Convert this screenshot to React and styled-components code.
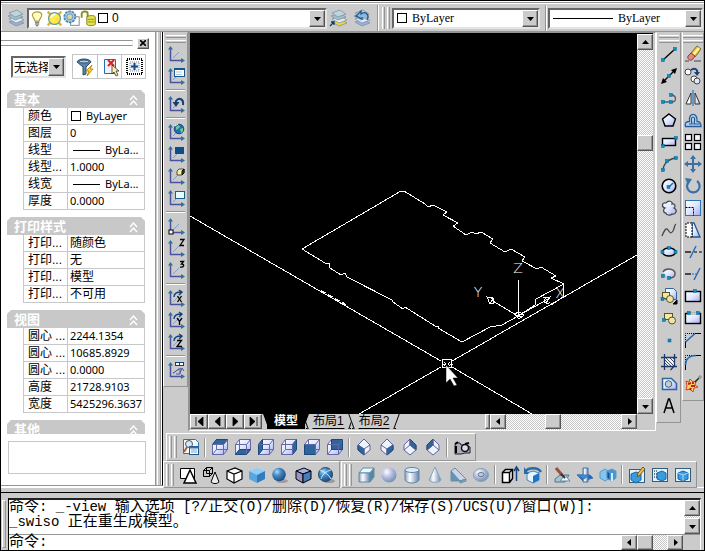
import React from 'react';
import styled, { createGlobalStyle, css } from 'styled-components';

const FACE = '#cbcbcb';
const SHADOW = '#949494';
const NAVY = '#4a52a0';
const BLUE = '#2f6699';

const GlobalStyle = createGlobalStyle`
  * {
    box-sizing: border-box;
  }

  body {
    margin: 0;
    background: ${FACE};
    color: #000;
    font: 12px/16px "Liberation Sans", "Noto Sans CJK SC", sans-serif;
  }

  button, input, select {
    margin: 0;
    padding: 0;
    border: 0;
    border-radius: 0;
    background: none;
    color: inherit;
    font: inherit;
  }

  svg {
    display: block;
    flex: none;
  }
`;

const Window = styled.div`
  display: flex;
  flex-direction: column;
  min-height: 100vh;
  border: 1px solid #000;
  background: ${FACE};
`;

const raised = css`
  border: 1px solid;
  border-color: #fff #555 #555 #fff;
  box-shadow: inset -1px -1px 0 ${SHADOW};
  background: ${FACE};
`;

const Main = styled.main`
  display: flex;
  flex: 1;
`;

const WorkArea = styled.div`
  display: flex;
  flex: 1;
  flex-direction: column;
  min-width: 0;
`;

const Upper = styled.div`
  display: flex;
  flex: 1;
  align-items: flex-start;
`;

/* ---------- toolbars ---------- */

const TopBar = styled.header`
  display: flex;
  height: 31px;
  padding-top: 3px;
  background: ${FACE};
  border-top: 1px solid #fff;
  border-bottom: 1px solid ${SHADOW};
  box-shadow: inset 0 1px 0 ${SHADOW}, inset 0 2px 0 #fff;
`;

const TopGroup = styled.div`
  display: flex;
  align-items: center;
  flex: ${props => (props.$grow ? '1 1 0' : 'none')};
  min-width: 0;
  padding-left: ${props => props.$start || 0}px;
  padding-right: ${props => props.$end || 0}px;
  border-right: 1px solid ${props => (props.$last ? FACE : SHADOW)};
  box-shadow: inset 1px 0 0 #fff;
`;

const Bar = styled.div`
  display: flex;
  flex: none;
  flex-direction: ${props => (props.$vertical ? 'column' : 'row')};
  align-items: center;
  width: ${props => (props.$width ? `${props.$width}px` : 'auto')};
  height: ${props => (props.$height ? `${props.$height}px` : 'auto')};
  padding: ${props => (props.$vertical ? '2px 0 5px' : '0 2px 0 2px')};
  margin-right: ${props => props.$gap || 0}px;
  border: 1px solid;
  border-color: ${props => (props.$vertical ? FACE : '#fff')} ${SHADOW} ${SHADOW} #fff;
`;

const Grip = styled.span`
  flex: none;
  ${props =>
    props.$vertical
      ? css`
          width: 20px;
          height: 8px;
          border-top: 1px solid #fff;
          border-bottom: 1px solid ${SHADOW};
          background: linear-gradient(${FACE} 0 1px, ${SHADOW} 1px 2px, ${FACE} 2px 4px, #fff 4px 5px, ${FACE} 5px);
        `
      : css`
          width: 8px;
          height: 22px;
          margin-right: 2px;
          border-left: 1px solid #fff;
          border-right: 1px solid ${SHADOW};
          background: linear-gradient(90deg, ${FACE} 0 1px, ${SHADOW} 1px 2px, ${FACE} 2px 4px, #fff 4px 5px, ${FACE} 5px);
        `}
`;

const Tool = styled.button`
  display: flex;
  flex: none;
  align-items: center;
  justify-content: center;
  width: ${props => (props.$wide ? 23 : 22)}px;
  height: 22px;
`;

const Divider = styled.span`
  flex: none;
  ${props =>
    props.$vertical
      ? css`
          width: 19px;
          height: 2px;
          margin: 2px 0;
          border-top: 1px solid ${SHADOW};
          border-bottom: 1px solid #fff;
        `
      : css`
          width: 2px;
          height: 19px;
          margin: 0 2px;
          border-left: 1px solid ${SHADOW};
          border-right: 1px solid #fff;
        `}
`;

const Docks = styled.div`
  padding: 2px 0 3px;
  border-bottom: 1px solid ${FACE};
  box-shadow: inset 0 -3px 0 ${FACE}, inset 0 -4px 0 #fff;
`;

const DockRow = styled.div`
  display: flex;
  padding-left: ${props => props.$indent || 0}px;
`;

/* ---------- combo boxes ---------- */

const ComboBox = styled.div`
  display: flex;
  flex: ${props => (props.$grow ? '1 1 0' : 'none')};
  align-items: center;
  width: ${props => props.$width}px;
  min-width: 0;
  height: ${props => props.$height || 21}px;
  padding-left: ${props => props.$pad || 0}px;
  border: 2px solid;
  border-color: #666 #e4e4e4 #e4e4e4 #666;
  background: #fff;

  select {
    flex: 1;
    min-width: 0;
    height: 100%;
    padding-left: ${props => props.$textPad || 0}px;
    appearance: none;
    outline: none;
    font: ${props => props.$font};
  }
`;

const ComboArrow = styled.span`
  ${raised}
  display: flex;
  flex: none;
  align-items: center;
  justify-content: center;
  width: 16px;
  height: 100%;
`;

const SERIF = '12px "Liberation Serif", serif';
const SANS = '12px "Liberation Sans", sans-serif';

/* ---------- properties palette ---------- */

const Palette = styled.aside`
  display: flex;
  flex: none;
  flex-direction: column;
  width: 162px;
  border-right: 1px solid #000;
  margin-bottom: 6px;
  padding: 5px 17px 0 6px;
  border-bottom: 1px solid ${SHADOW};
  box-shadow: 0 2px 0 #fff;
  background: linear-gradient(90deg, #fff 0 154px, ${SHADOW} 154px 155px, ${FACE} 155px 156px, #fff 156px 157px, ${FACE} 157px 159px, ${SHADOW} 159px 160px, #fff 160px);
`;

const TitleRow = styled.div`
  display: flex;
  align-items: center;
  gap: 4px;
  height: 12px;
  margin-left: -6px;
  margin-right: -4px;
`;

const TitleGrip = styled.span`
  flex: 1;
  height: 6px;
  border: 1px solid ${SHADOW};
  border-left: 0;
  border-right-color: #eee;
`;

const CloseButton = styled.button`
  ${raised}
  display: flex;
  align-items: center;
  justify-content: center;
  width: 12px;
  height: 11px;
`;

const PickRow = styled.div`
  display: flex;
  justify-content: space-between;
  align-items: center;
  margin: 5px -1px 11px 4px;
`;

const PickTools = styled.div`
  display: flex;
  border: 1px solid #c4c4c4;

  button + button {
    border-left: 1px solid #c4c4c4;
  }

  button {
    width: 24px;
    height: 23px;
  }
`;

const Section = styled.section`
  margin-bottom: 7px;
`;

const SectionHead = styled.button`
  display: flex;
  align-items: flex-start;
  justify-content: space-between;
  width: 100%;
  height: ${props => (props.$cut ? 14 : 18)}px;
  padding: 1px 7px 0 7px;
  overflow: hidden;
  background: #c8c8c8;
  clip-path: polygon(4px 0, calc(100% - 4px) 0, 100% 4px, 100% 100%, 0 100%, 0 4px);
  color: #fff;
  font-size: 13px;
  font-weight: bold;
  line-height: 17px;
  text-align: left;

  svg {
    margin-top: 4px;
  }
`;

const PropTable = styled.table`
  width: calc(100% - 16px);
  margin-left: 16px;
  border-spacing: 0;
  table-layout: fixed;

  th, td {
    height: 17px;
    padding: 0 0 0 2px;
    overflow: hidden;
    border-right: 1px solid #c8c8c8;
    border-bottom: 1px solid #c8c8c8;
    font-weight: normal;
    line-height: 16px;
    text-align: left;
    white-space: nowrap;
  }

  th {
    width: 45px;
    padding-left: 4px;
    border-left: 1px solid #c8c8c8;
  }
`;

const Value = styled.span`
  display: flex;
  align-items: center;
  height: 16px;
  font-family: "Noto Sans", "Noto Sans CJK SC", sans-serif;
  font-size: ${props => (props.$cjk ? 12 : 11)}px;
`;

const Swatch = styled.i`
  flex: none;
  width: 10px;
  height: 10px;
  margin: 0 ${props => (props.$tight ? 0 : 5)}px 0 1px;
  border: 1px solid #000;
`;

const Rule = styled.i`
  flex: none;
  width: ${props => props.$width || 27}px;
  height: 1px;
  margin: 0 5px 0 3px;
  background: #000;
`;

const Info = styled.div`
  height: 33px;
  margin: 0 -1px 11px 1px;
  border: 1px solid #c8c8c8;
`;

/* ---------- drawing area ---------- */

const Viewport = styled.div`
  display: flex;
  flex: 1;
  flex-direction: column;
  align-self: stretch;
  min-width: 0;
  padding-right: 2px;
  border: solid;
  border-width: 1px 1px 1px 2px;
  border-color: ${SHADOW} #fff #fff ${SHADOW};
`;

const ViewRow = styled.div`
  display: flex;
  flex: 1;
  border-top: 1px solid #000;
`;

const Canvas = styled.svg`
  flex: 1 1 0;
  width: 0;
  min-width: 0;
  align-self: stretch;
  background: #000;
`;

const TabRow = styled.div`
  display: flex;
  flex: none;
  height: 16px;
  margin-right: 16px;
`;

const Track = styled.div`
  display: flex;
  flex: none;
  flex-direction: ${props => (props.$vertical ? 'column' : 'row')};
  justify-content: space-between;
  width: ${props => (props.$width ? `${props.$width}px` : 'auto')};
  background: repeating-conic-gradient(#fff 0 25%, #c6c6c6 0 50%) 0 0 / 2px 2px;
`;

const ScrollButton = styled.button`
  ${raised}
  display: flex;
  flex: none;
  align-items: center;
  justify-content: center;
  width: ${props => props.$w || 16}px;
  height: ${props => props.$h || 16}px;
`;

const Gap = styled.span`
  flex: ${props => props.$n || 1} 1 0;
`;

const Tab = styled.button`
  position: relative;
  z-index: ${props => (props.$active ? 1 : 0)};
  height: 15px;
  margin-right: 1px;
  padding: 0 7px;
  border-bottom: 1px solid #000;
  background: ${props => (props.$active ? '#000' : FACE)};
  color: ${props => (props.$active ? '#fff' : '#000')};
  font-weight: ${props => (props.$active ? 'bold' : 'normal')};
  line-height: 14px;

  &::before, &::after {
    content: '';
    position: absolute;
    top: 0;
    width: 4px;
    height: 15px;
    background: inherit;
  }

  &::before {
    left: -1px;
    border-left: 1px solid #000;
    transform: skewX(20deg);
  }

  &::after {
    right: -1px;
    border-right: 1px solid #000;
    transform: skewX(-20deg);
  }
`;

const Tabs = styled.div`
  display: flex;
  padding-left: 5px;
`;

/* ---------- command window ---------- */

const Command = styled.footer`
  display: flex;
  flex: none;
  height: 58px;
  padding: 5px 3px 0 1px;
  border-top: 1px solid #000;
`;

const CommandGrip = styled.span`
  width: 4px;
  margin: 2px 2px 2px 0;
  border: 1px solid;
  border-color: #fff ${SHADOW} ${SHADOW} #fff;
`;

const CommandBox = styled.div`
  flex: 1;
  min-width: 0;
  border-top: 2px solid #222;
  border-left: 1px solid #000;
  border-right: 1px solid #fff;
`;

const History = styled.div`
  display: flex;
  height: 35px;
  border-bottom: 1px solid ${SHADOW};
  background: #fff;
`;

const Lines = styled.div`
  flex: 1;
  min-width: 0;
  overflow: hidden;
`;

const Line = styled.p`
  margin: 0;
  height: 15px;
  font: 14px/15px "Liberation Mono", "Noto Sans CJK SC", monospace;
  white-space: pre;
`;

const Cjk = styled.span`
  font-size: 15px;
  line-height: 15px;
  vertical-align: bottom;
`;

const Prompt = styled.div`
  display: flex;
  height: 15px;
  background: #fff;

  label {
    flex: none;
    font: 14px/15px "Liberation Mono", "Noto Sans CJK SC", monospace;
  }

  input {
    flex: 1;
    min-width: 0;
    padding-left: 6px;
    outline: none;
    font: 14px "Liberation Mono", monospace;
  }
`;

const Corner = styled.span`
  width: ${props => (props.$open ? 14 : 17)}px;
  background: ${props => (props.$open ? 'none' : FACE)};
`;

/* ---------- icons ---------- */

const Icon = ({ children, size = 20 }) => (
  <svg width={size} height={size} viewBox="0 0 20 20" fill="none" stroke="#000" aria-hidden="true">
    {children}
  </svg>
);

const arrowPaths = {
  up: 'M0 5h7L3.500 1z',
  down: 'M0 2h7L3.500 6z',
  left: 'M5 0v7L1 3.500z',
  right: 'M2 0v7l4-3.500z',
};

const Arrow = ({ dir }) => (
  <svg width="7" height="7" viewBox="0 0 7 7" aria-hidden="true">
    <path d={arrowPaths[dir]} />
  </svg>
);

const Dot = ({ x, y }) => <rect x={x - 1.5} y={y - 1.5} width="3" height="3" fill="#0a8fc4" stroke="#05628c" strokeWidth=".5" />;

const Defs = () => (
  <svg width="0" height="0" style={{ position: 'absolute' }} aria-hidden="true">
    <defs>
      <linearGradient id="glass" x1="0" y1="0" x2="1" y2="1">
        <stop offset="0" stopColor="#fff" />
        <stop offset=".5" stopColor="#dfe8ff" />
        <stop offset="1" stopColor="#a7a8ec" />
      </linearGradient>
      <linearGradient id="metal">
        <stop offset="0" stopColor="#8f9fc4" />
        <stop offset=".35" stopColor="#fff" />
        <stop offset=".65" stopColor="#b9c3df" />
        <stop offset="1" stopColor="#5a86a6" />
      </linearGradient>
      <radialGradient id="pearl" cx=".35" cy=".3" r=".75">
        <stop offset="0" stopColor="#fff" />
        <stop offset=".5" stopColor="#b5b9e0" />
        <stop offset="1" stopColor="#6d8fae" />
      </radialGradient>
      <radialGradient id="ball" cx=".35" cy=".3" r=".75">
        <stop offset="0" stopColor="#a9dcfa" />
        <stop offset=".4" stopColor="#4688c4" />
        <stop offset="1" stopColor="#17497c" />
      </radialGradient>
    </defs>
  </svg>
);

const Ucs = ({ children }) => (
  <Icon>
    <path d="M7 14l6-6" stroke="#7fa0c4" />
    <path d="M4.500 4v13M4 16.500h13" stroke={NAVY} strokeWidth="1.500" />
    <path d="M2 5.500L4.500 2 7 5.500zM15 14l4 2.500-4 2.500z" fill="#2b7499" stroke="none" />
    {children}
  </Icon>
);

const axisArc = <path d="M8 9c0-4 3-5 7-5M13 2l3 2-3 3" stroke="#123f77" strokeWidth="1.400" />;

const glyphX = <path d="M11.500 8l4 6M15.500 8l-4 6" strokeWidth="1.300" />;
const glyphY = <path d="M11 8l2.500 3.500L16 8M13.500 11v4" strokeWidth="1.300" />;
const glyphZ = <path d="M11 8.500h4.500l-4.500 6h5" strokeWidth="1.300" />;

const ucsIcons = [
  ['UCS', null],
  ['命名 UCS', <g key="g"><rect x="8.500" y="2.500" width="10" height="8" fill="#fff" stroke="#17578c" /><path d="M8 3h11" stroke="#17578c" strokeWidth="2" /><path d="M10 6h6M10 8.500h6" stroke="#aac3de" /></g>],
  '|',
  ['上一个 UCS', <g key="g"><path d="M17 11c1-6-4-8-7-4v3" stroke="#173f77" strokeWidth="2" /><path d="M6.500 8h7L10 13z" fill="#173f77" stroke="none" /></g>],
  '|',
  ['世界 UCS', <g key="g"><circle cx="13" cy="7" r="4.800" fill="#1d6cbc" stroke="#1c477c" /><path d="M10 5l3-2 1 2-2 2-2 1zM14 7l3-1v3l-2 2z" fill="#6ed07a" stroke="none" /><path d="M9 4l3-2" stroke="#fff" /></g>],
  ['对象 UCS', <rect key="r" x="9.500" y="3.500" width="8" height="6" fill="#0d4f85" stroke="#0d4f85" />],
  ['面 UCS', <g key="g"><path d="M11 5l2-2h5v4l-2 2h-5z" fill="#f4edae" stroke="#554f2c" /><path d="M16 5l2-2v4l-2 2z" fill="#64603a" /></g>],
  ['视图 UCS', <rect key="r" x="9.500" y="3.500" width="9" height="7" fill="#e8fbff" stroke="#1a628c" />],
  '|',
  ['原点 UCS', <rect key="r" x="3" y="14" width="4" height="4" fill="#fff" />],
  ['Z 轴矢量 UCS', <path key="p" d="M14 1.500h4l-4 6h4" strokeWidth="1.300" />],
  ['三点 UCS', <path key="p" d="M14 1.500h3.500L15.500 4c4 0 2 4-1.500 3" strokeWidth="1.300" />],
  '|',
  ['X 轴旋转 UCS', <g key="g">{axisArc}{glyphX}</g>],
  ['Y 轴旋转 UCS', <g key="g">{axisArc}{glyphY}</g>],
  ['Z 轴旋转 UCS', <g key="g">{axisArc}{glyphZ}</g>],
  '|',
  ['应用 UCS', <g key="g"><rect x="9.500" y="2.500" width="4" height="3" fill="#fff" stroke="#123f77" /><rect x="13.500" y="2.500" width="4" height="3" fill="#fff" stroke="#123f77" /><path d="M7 13l8-5M10 14h4V9M14 13l2-5 2 3" stroke={NAVY} /></g>],
];

const drawIcons = [
  ['直线', <g key="g"><path d="M4 16L16 5" strokeWidth="1.300" /><Dot x={4} y={16} /><Dot x={16} y={5} /></g>],
  ['构造线', <g key="g"><path d="M4 16L16 4" strokeWidth="1.300" /><path d="M2 18l2-6 4 4zM18 2l-6 2 4 4z" fill="#000" stroke="none" /><Dot x={10} y={10} /></g>],
  ['多段线', <g key="g"><path d="M4 14h8" stroke={BLUE} strokeWidth="1.500" /><path d="M12 14c6 1 6-7 0-7" stroke="#7c4e50" strokeWidth="1.300" /><Dot x={4} y={14} /><Dot x={12} y={14} /><Dot x={12} y={7} /></g>],
  ['正多边形', <path key="p" d="M10 4l6.500 5-2.500 7H6L3.500 9z" fill="url(#glass)" strokeWidth="1.400" />],
  ['矩形', <g key="g"><rect x="3.500" y="6.500" width="13" height="7" fill="url(#glass)" strokeWidth="1.400" /><Dot x={4} y={14} /><Dot x={17} y={6} /></g>],
  ['圆弧', <g key="g"><path d="M4 17C4 10 9 5 17 4" strokeWidth="1.300" stroke="#444" /><Dot x={4} y={16} /><Dot x={8} y={7} /><Dot x={17} y={4} /></g>],
  ['圆', <g key="g"><circle cx="10" cy="10" r="6.800" fill="url(#glass)" strokeWidth="1.600" /><path d="M10 11l4-4" stroke="#1471a5" strokeWidth="1.500" /><Dot x={9.5} y={11} /></g>],
  ['修订云线', <path key="p" d="M6 10c-4-1-3-6 1-5 2-3 7-2 6 1 3-1 4 3 2 4 4 2 2 7-2 6-2 2-6 1-6-1-3 0-3-4-1-5z" fill="url(#glass)" stroke="#444" strokeWidth="1.200" />],
  ['样条曲线', <path key="p" d="M3 16c2-5 4-9 6-6s3 4 5 1 1-6 3-7" strokeWidth="1.300" stroke="#444" />],
  ['椭圆', <g key="g"><ellipse cx="10" cy="10" rx="6.500" ry="4" fill="url(#glass)" strokeWidth="1.500" /><Dot x={3.5} y={10} /><Dot x={16.5} y={10} /><Dot x={10} y={6} /></g>],
  ['椭圆弧', <g key="g"><path d="M4 8c3-5 13-3 12 2 0 3-3 4-6 4" fill="url(#glass)" stroke="#555" strokeWidth="1.400" /><Dot x={4} y={12} /><Dot x={10} y={14} /></g>],
  ['插入块', <g key="g"><path d="M6.500 2.500h8l3 3v8h-11z" fill="url(#glass)" stroke={BLUE} /><rect x="3.500" y="6.500" width="7" height="6" fill="#f4e69a" stroke="#57522c" /><circle cx="11" cy="13" r="3.500" fill="#efe6a5" stroke="#57522c" /><path d="M14 18h4v-4z" fill="#000" /><Dot x={3.5} y={13} /></g>],
  ['创建块', <g key="g"><rect x="5.500" y="5.500" width="8" height="6" fill="#f8eb9b" stroke="#57522c" /><circle cx="13" cy="12.500" r="3.500" fill="#efe6a5" stroke="#57522c" /><Dot x={5} y={12} /></g>],
  ['点', <Dot key="d" x={10.5} y={10.5} />],
  ['图案填充', <g key="g"><path d="M6 5h10v9H6z" fill="#eef2ff" stroke="none" /><path d="M6 11l3 3M6 8l6 6M6 5l9 9M10 5l6 6M13 5l3 3" stroke="#222" strokeWidth=".8" /><path d="M5.500 2v16M15.500 2v12l-4 4M2 5.500h16M2 14.500h16" stroke="#1c386e" strokeWidth="1.300" /></g>],
  ['面域', <g key="g"><path d="M3.500 4.500h9l5 5v6h-14z" fill="url(#glass)" stroke={BLUE} strokeWidth="1.500" /><circle cx="9.500" cy="10" r="3.300" fill={FACE} stroke={BLUE} /></g>],
  ['多行文字', <path key="p" d="M5 17l4.500-14h1L15 17M6.500 12h7" strokeWidth="1.500" />],
];

const modifyIcons = [
  ['删除', <g key="g"><path d="M8 9l6-7 4 3-6 8z" fill="#f5c43a" stroke="#7c6732" /><path d="M10 11l6-7" stroke="#fff4a8" strokeWidth="2" /><path d="M5 12l3-3 4 3-3 4c-2 1-5-1-4-4z" fill="#ed877d" stroke="#7a4341" /><path d="M2 17h4M11 17h7" stroke="#444" /></g>],
  ['复制', <g key="g"><circle cx="5" cy="6" r="3" fill="#fff" stroke="#444" /><circle cx="11" cy="13" r="3" fill="#fff" stroke="#444" /><circle cx="14" cy="15" r="3" fill="#dfe7ff" stroke="#444" /><path d="M8 4c4-3 7 0 6 3" stroke="#16417d" strokeWidth="2" /><path d="M11 6h6l-3 4z" fill="#16417d" stroke="none" /></g>],
  ['镜像', <g key="g"><path d="M8 5v11H3z" fill="#fff" stroke="#333" /><path d="M12 5v11h5z" fill="url(#glass)" stroke="#333" /><path d="M10 2v16" stroke="#3a83c7" strokeWidth="1.400" /></g>],
  ['偏移', <g key="g"><path d="M2.500 16.500c-1-4 1-5 4-5C5 2 15 2 14 11.500c3 0 4 1 4 5z" fill="#b9d3ec" stroke="#245d99" strokeWidth="1.300" /><path d="M6 14h3c-1-4-1-7 1-7s2 3 1 7h6" stroke="#1d5591" strokeWidth="1.200" /></g>],
  ['阵列', <g key="g" fill="#f3f5ff" strokeWidth="1.200"><rect x="2.500" y="2.500" width="6" height="6" /><rect x="11.500" y="2.500" width="6" height="6" /><rect x="2.500" y="11.500" width="6" height="6" /><rect x="11.500" y="11.500" width="6" height="6" /></g>],
  ['移动', <g key="g"><path d="M10 4v12M4 10h12" stroke="#3b70a6" strokeWidth="2" /><path d="M10 1l3 4H7zM10 19l3-4H7zM1 10l4-3v6zM19 10l-4-3v6z" fill="#3b70a6" stroke="none" /></g>],
  ['旋转', <g key="g"><path d="M6 5.500a6.300 6.300 0 1 0 8-.5" stroke="#3b70a6" strokeWidth="2.200" /><path d="M2 2l7 1-4 6z" fill="#3b70a6" stroke="none" /></g>],
  ['缩放', <g key="g"><rect x="2.500" y="2.500" width="15" height="15" fill="url(#glass)" stroke="#2b75b8" /><path d="M2.500 9.500h8v8" strokeDasharray="2 1" /></g>],
  ['拉伸', <g key="g"><path d="M9 3h2l6 14H9z" fill="url(#glass)" stroke="#205a94" strokeWidth="1.300" /><path d="M9 17H3V3h6v14" fill="#fff" strokeDasharray="2 1" /></g>],
  ['修剪', <g key="g"><path d="M7 16l6-12" stroke="#1d6bc0" strokeWidth="1.400" /><path d="M2 10h6" strokeWidth="1.300" /><path d="M11 10h8" strokeDasharray="3 2" /></g>],
  ['延伸', <g key="g"><path d="M11 16l6-12" stroke="#1d6bc0" strokeWidth="1.400" /><path d="M2 10h6" strokeWidth="1.300" /><path d="M9 10h5" stroke="#1d6bc0" strokeDasharray="2 1" /></g>],
  ['打断于点', <g key="g"><rect x="2.500" y="5.500" width="15" height="10" fill="url(#glass)" strokeWidth="1.400" /><Dot x={12} y={5} /></g>],
  ['打断', <g key="g"><rect x="2.500" y="5.500" width="15" height="10" fill="url(#glass)" strokeWidth="1.400" /><path d="M7 5.500h7" stroke={FACE} strokeWidth="2" /><Dot x={6} y={5} /><Dot x={15} y={5} /></g>],
  ['倒角', <g key="g"><path d="M2.500 18v-6M12 3.500h6" /><path d="M2.500 12V3.500H12" strokeDasharray="1 1" /><path d="M2.500 12L12 3.500" stroke="#1769b8" strokeWidth="1.500" /></g>],
  ['圆角', <g key="g"><path d="M2.500 18v-5M13 3.500h5" /><path d="M2.500 12V3.500H12" strokeDasharray="1 1" /><path d="M2.500 13c0-6 4-9.500 10.500-9.500" stroke="#1769b8" strokeWidth="1.500" /></g>],
  ['分解', <g key="g"><path d="M3 7l3 1 1-3 3 3 3-1-1 4 3 2-4 1-1 4-3-3-4 1 1-4z" fill="#fbd75a" stroke="#d5421d" /><path d="M5 10l3-1M8 12h4M8 14l-1 2M10 8v2" stroke="#c51d1d" strokeWidth="2" /><path d="M12 8l4-4" stroke="#222" strokeWidth="1.500" /><path d="M15 3h4M17 1v4" stroke="#888" /></g>],
];

// the six faces of an oblique cube
const faces = {
  top: 'M2.500 7.500l4-5h11l-4 5z',
  bottom: 'M2.500 17.500l4-5h11l-4 5z',
  left: 'M2.500 7.500l4-5v10l-4 5z',
  right: 'M13.500 7.500l4-5v10l-4 5z',
  front: 'M2.500 7.500h11v10h-11z',
  back: 'M6.500 2.500h11v10h-11z',
};

const Cube = ({ side }) => (
  <g stroke="#6467a9">
    <path d="M2.500 7.500l4-5h11v10l-4 5h-11z" fill="url(#glass)" />
    <path d="M6.500 2.500v10h11M6.500 12.500l-4 5" />
    <path d={faces[side]} fill={BLUE} stroke="#164a7a" />
    <path d="M2.500 7.500h11v10M13.500 7.500l4-5" />
  </g>
);

const IsoCube = ({ d, inner }) => (
  <g stroke="#62659e">
    <path d="M10 2l6 6v5l-6 5-6-5V8z" fill="#edf3ff" />
    <path d={d} fill={BLUE} stroke="#174a77" />
    <path d={inner || 'M4 8l6 4 6-4M10 12v6'} />
  </g>
);

const viewIcons = [
  ['命名视图', <g key="g"><path d="M2.500 2.500h12l3 3v11h-15z" fill="#f3fbff" stroke="#2d73af" /><circle cx="8" cy="7" r="3.500" fill="#dce6f0" stroke="#555" /><path d="M6 10l-3 5" stroke="#a55d3e" strokeWidth="2" /><rect x="8.500" y="9.500" width="9" height="8" fill="#fff" stroke="#17578c" /><path d="M8 10.500h10" stroke="#2f6fb0" strokeWidth="2" /><path d="M10 13h6M10 15h6" stroke="#7ba2c9" /></g>],
  '|',
  ['俯视', <Cube key="c" side="top" />],
  ['仰视', <Cube key="c" side="bottom" />],
  ['左视', <Cube key="c" side="left" />],
  ['右视', <Cube key="c" side="right" />],
  ['主视', <Cube key="c" side="front" />],
  ['后视', <Cube key="c" side="back" />],
  '|',
  ['西南等轴测', <IsoCube key="i" d="M4 8l6 4v6l-6-5z" />],
  ['东南等轴测', <IsoCube key="i" d="M16 8l-6 4v6l6-5z" />],
  ['东北等轴测', <IsoCube key="i" d="M10 2l6 6v5l-6-5z" inner="M4 13l6-5 6 5M10 2v6" />],
  ['西北等轴测', <IsoCube key="i" d="M10 2L4 8v5l6-5z" inner="M4 13l6-5 6 5M10 2v6" />],
  '|',
  ['相机', <g key="g"><path d="M4 6h4l1 2h6l3 2v6h-5l-4 1H3V8z" fill="#a9adbf" stroke="#222" /><circle cx="13" cy="11" r="3.500" fill="#d9def2" stroke="#111" strokeWidth="1.500" /><path d="M3 7l3-2M4 9v7M13 7l4-1" strokeWidth="2" /></g>],
];

const hexCube = 'M3 6l8-3 7 3v8l-8 4-7-4z';

const shadeIcons = [
  ['二维线框', <g key="g"><path d="M2.500 3.500h14v10h-14z" fill="#fff" /><path d="M12 5l6 13H6z" fill="#fff" strokeWidth="1.500" /></g>],
  ['三维线框', <g key="g"><path d="M2.500 5.500l3-3h6v6l-3 3h-6zM2.500 5.500h6v6M8.500 5.500l3-3M5.500 2.500v6h6" /><path d="M14 7l4 10c-2 2-6 2-8 0z" fill="#eee" /></g>],
  ['三维隐藏', <g key="g"><path d={hexCube} fill="#fff" strokeWidth="1.200" /><path d="M3 6l7 3 8-3M10 9v9" strokeWidth="1.200" /></g>],
  ['平面着色', <g key="g" stroke="none"><path d="M2 6l8-3 8 3-8 4z" fill="#8bd0fa" /><path d="M2 6l8 4v8l-8-4z" fill="#5ba5df" /><path d="M18 6l-8 4v8l8-4z" fill="#347bbd" /></g>],
  ['体着色', <g key="g" stroke="none"><ellipse cx="12" cy="16" rx="6" ry="2" fill="#a29ca0" /><circle cx="9" cy="9.500" r="6.800" fill="url(#ball)" /></g>],
  ['带边框平面着色', <g key="g"><path d="M3 6l8-3 7 3-8 3z" fill="#a5aee8" /><path d="M3 6l7 3v9l-7-4z" fill="#9795c4" /><path d="M18 6l-8 3v9l8-4z" fill="#477db7" /></g>],
  ['带边框体着色', <g key="g"><ellipse cx="13" cy="16" rx="6" ry="2" fill="#999" stroke="none" /><circle cx="9.500" cy="9.500" r="7" fill="url(#ball)" stroke="#234b6d" /><path d="M4 5c5 2 9 5 11 9M15 5c-5 1-9 5-10 9" stroke="#c5efff" /></g>],
];

const solidIcons = [
  ['长方体', <g key="g" stroke="#628ca8"><path d="M3 8l4-5h11l-4 5z" fill="#e8f8ff" /><path d="M3 8h11v9H3z" fill="url(#metal)" /><path d="M14 8l4-5v9l-4 5z" fill="#5489a4" /></g>],
  ['球体', <circle key="c" cx="10" cy="10" r="7.500" fill="url(#pearl)" stroke="none" />],
  ['圆柱体', <g key="g" stroke="#64859e"><path d="M3 5v10c2 4 12 4 14 0V5z" fill="url(#metal)" /><ellipse cx="10" cy="5" rx="7" ry="2.500" fill="#d9edff" /></g>],
  ['圆锥体', <path key="p" d="M10 2L4 15c2 3 10 3 12 0z" fill="url(#metal)" stroke="#82a5b5" />],
  ['楔体', <g key="g" stroke="#658ea4"><path d="M3 16V6l9 10z" fill="#6494b5" /><path d="M3 6l4-3 11 11-6 2z" fill="#c9d5ea" /><path d="M12 16l6-2v2l-6 2z" fill="#7aa5ba" /></g>],
  ['圆环体', <g key="g"><ellipse cx="10" cy="10" rx="7.500" ry="6.500" fill="url(#pearl)" stroke="#84a6b6" /><ellipse cx="10" cy="9.500" rx="3" ry="2" fill={FACE} stroke="#5b7f94" /></g>],
  '|',
  ['拉伸实体', <g key="g"><path d="M2.500 7.500l3-3h7v9l-3 4h-7z" fill="#fff" strokeWidth="1.500" /><path d="M2.500 7.500h7v10M9.500 7.500l3-3" strokeWidth="1.500" /><path d="M16.500 16V4M14 6l2.500-4L19 6" stroke="#16457b" strokeWidth="1.500" /></g>],
  ['旋转实体', <g key="g"><path d="M4 8l6-2 6 2v7l-6 3-6-3z" fill="#e7f4ff" stroke="#4188c1" /><path d="M10 11l6-3v7l-6 3z" fill="#1b73ca" stroke="none" /><path d="M2 7C5 2 15 2 18 7" stroke="#296ba6" strokeWidth="2.500" /><path d="M1 2v7h5z" fill="#296ba6" stroke="none" /></g>],
  '|',
  ['剖切', <g key="g"><path d="M3 14l5-4h9l-4 7H3z" fill="#a8c4d4" stroke="#547485" /><path d="M13 10l5 6H8z" fill="#eef4fa" stroke="#638ba5" /><path d="M4 3l6 7" stroke="#9c4f39" strokeWidth="3" /><path d="M9 9l4 4" stroke="#333" strokeWidth="2" /></g>],
  ['切割', <g key="g" stroke="#3d76b1"><path d="M2 10h13l3 3-10 3z" fill="#1c68be" /><path d="M8 3h5v14H8z" fill="url(#metal)" /><path d="M2 10h12l-5 4z" fill="#3b8fdd" /></g>],
  ['干涉', <g key="g" stroke="#5c9ac8"><path d="M2 7l5-3 5 3v6l-5 3-5-3z" fill="#83c6ef" /><path d="M9 6l5-2 4 2v7l-4 3-5-3z" fill="#4497d6" /><path d="M9 6l3 2v7l-3-2z" fill="#174d9d" /><path d="M14 8v8" stroke="#c9f2ff" strokeWidth="2" /></g>],
  '|',
  ['设置图形', <g key="g"><rect x="2.500" y="4.500" width="15" height="13" fill="#e2f3fb" stroke="#315d7e" /><path d="M4 9l5-2 5 2v6l-5 3-5-3z" fill="#399be1" stroke="#1c65a3" /><path d="M10 12l1-4 5-6 2 2-5 6z" fill="#efbf43" stroke="#775524" /></g>],
  ['设置视图', <g key="g"><rect x="2.500" y="3.500" width="15" height="13" fill="#e2f3fb" stroke="#315d7e" /><path d="M4 6h3M4 9h3M4 12h3" strokeDasharray="1 1" /><path d="M7 8l5-2 4 2v6l-4 2-5-2z" fill="#399be1" stroke="#1c65a3" /></g>],
  ['设置轮廓', <g key="g"><rect x="2.500" y="3.500" width="15" height="13" fill="#e2f3fb" stroke="#315d7e" /><path d="M5 8l5-2 5 2v6l-5 2-5-2z" fill="#399be1" stroke="#1c65a3" /><path d="M5 8l5 2 5-2M10 10v6" stroke="#a4daf8" /></g>],
];

const Layers = ({ gold, back }) => (
  <Icon>
    <g stroke="#7f93a8" strokeWidth=".8">
      <path d="M3 14l8-3 7 4-8 3z" fill={gold ? '#f3d62c' : '#9facd5'} />
      <path d="M3 11l8-3 7 4-8 3z" fill="#e4e9f5" />
      <path d="M2 8l8-3 7 4-8 3z" fill="#9cc4c4" />
      <path d="M3 5l8-3 6 4-8 3z" fill="#c0d4dd" />
    </g>
    {gold && <path d="M1 18l4-4M2 14h3v3" stroke="#123c70" strokeWidth="1.300" />}
    {back && <path d="M15 12c3-6-2-9-6-6v-3l-5 5 6 3V9" fill="#8fb6d4" stroke="#1c5b94" strokeWidth="1.300" />}
  </Icon>
);

const Bulb = () => (
  <Icon size={17}>
    <path d="M7 13c0-3-3-4-3-7 0-5 11-5 11 0 0 3-3 4-3 7z" fill="#fffcc5" stroke="#b39835" strokeWidth="1.300" />
    <path d="M7 14.500h5M7 16.500h5M8 18.500h3" stroke="#555" strokeWidth="1.200" />
  </Icon>
);

const Sun = () => (
  <Icon size={17}>
    <path d="M2 2l4 4M18 2l-4 4M2 18l4-4M18 18l-4-4" stroke="#e0b52c" strokeWidth="3" />
    <circle cx="10" cy="10" r="7" fill="#ffea4a" stroke="#6d9b94" strokeWidth="1.500" />
    <path d="M6 9c1-3 3-4 5-4" stroke="#fff" strokeWidth="2" />
  </Icon>
);

const SunViewport = () => (
  <Icon size={17}>
    <rect x="9" y="8" width="10" height="10" fill="#fff" stroke="#777" />
    <circle cx="8" cy="8" r="6.500" fill="#a8ceda" stroke="#4c82bb" strokeWidth="2" strokeDasharray="3 1" />
    <circle cx="8" cy="8" r="3.500" fill="#d7d9a0" stroke="#5b90b7" />
  </Icon>
);

const Lock = () => (
  <Icon size={17}>
    <path d="M2 9V4c0-3 7-3 7 0v6" stroke="#8b8c1c" strokeWidth="2.200" />
    <path d="M8 8c3-2 9-2 10 0v9c-2 2-8 2-10 0z" fill="#e5e24c" stroke="#77781c" />
    <path d="M9 11h8M9 14h8" stroke="#8e8e28" />
  </Icon>
);

const Chevrons = () => (
  <svg width="9" height="11" viewBox="0 0 9 11" fill="none" stroke="#fff" strokeWidth="1.400" aria-hidden="true">
    <path d="M1 5l3.500-4L8 5M1 10l3.500-4L8 10" />
  </svg>
);

/* ---------- parts ---------- */

const Toolbar = ({ items, vertical, wrap: Wrap = Icon, ...props }) => (
  <Bar $vertical={vertical} role="toolbar" {...props}>
    <Grip $vertical={vertical} />
    {items.map((item, i) =>
      item === '|' ? (
        <Divider key={i} $vertical={vertical} />
      ) : (
        <Tool key={i} type="button" aria-label={item[0]} $wide={!vertical}>
          <Wrap>{item[1]}</Wrap>
        </Tool>
      )
    )}
  </Bar>
);

const Combo = ({ label, value, children, ...props }) => (
  <ComboBox {...props}>
    {children}
    <select aria-label={label} defaultValue={value}>
      <option>{value}</option>
    </select>
    <ComboArrow>
      <Arrow dir="down" />
    </ComboArrow>
  </ComboBox>
);

const sections = [
  {
    title: '基本',
    rows: [
      ['颜色', 'ByLayer', 'swatch'],
      ['图层', '0'],
      ['线型', 'ByLa...', 'rule'],
      ['线型...', '1.0000'],
      ['线宽', 'ByLa...', 'rule'],
      ['厚度', '0.0000'],
    ],
  },
  {
    title: '打印样式',
    rows: [
      ['打印...', '随颜色', 'cjk'],
      ['打印...', '无', 'cjk'],
      ['打印...', '模型', 'cjk'],
      ['打印...', '不可用', 'cjk'],
    ],
  },
  {
    title: '视图',
    rows: [
      ['圆心 ...', '2244.1354'],
      ['圆心 ...', '10685.8929'],
      ['圆心 ...', '0.0000'],
      ['高度', '21728.9103'],
      ['宽度', '5425296.3637'],
    ],
  },
];

const Properties = () => (
  <Palette>
    <TitleRow>
      <TitleGrip />
      <CloseButton type="button" aria-label="关闭">
        <svg width="6" height="6" viewBox="0 0 6 6" stroke="#000" strokeWidth="1.600">
          <path d="M0 0l6 6M6 0L0 6" />
        </svg>
      </CloseButton>
    </TitleRow>
    <PickRow>
      <Combo label="选择对象" value="无选择" $width={55} $height={22} $textPad={1} $font={'12px "Noto Sans CJK SC", sans-serif'} />
      <PickTools>
        <Tool type="button" aria-label="快速选择">
          <Icon>
            <path d="M2 5c1-4 13-4 14 0l-5 5v7l-3 1v-8z" fill="#5b82a8" stroke="#2b506f" />
            <ellipse cx="9" cy="4.500" rx="5" ry="1.500" fill="#b8d0e4" stroke="#2b506f" />
            <path d="M17 8l-6 6h3l-2 5 6-7h-3z" fill="#ffdb38" stroke="#b98d15" />
          </Icon>
        </Tool>
        <Tool type="button" aria-label="选择对象">
          <Icon>
            <path d="M4.500 2.500h11v14h-11z" fill="#eef2ff" stroke="#276aae" />
            <path d="M8 3l6 6M14 3L8 9" stroke="#db201b" strokeWidth="2" />
            <path d="M12 8v9l2-2 2 4 2-1-2-4h3z" fill="#ffefa6" stroke="#333" strokeWidth=".8" />
          </Icon>
        </Tool>
        <Tool type="button" aria-label="切换 PICKADD">
          <Icon>
            <rect x="3" y="2" width="15" height="15" strokeDasharray="1 1" strokeWidth="2" />
            <rect x="6" y="5" width="9" height="9" fill="#e5f1ff" stroke="#888" strokeDasharray="1 1" />
            <path d="M10.500 6v7M7 9.500h7" stroke="#164a86" strokeWidth="2" />
          </Icon>
        </Tool>
      </PickTools>
    </PickRow>
    {sections.map(section => (
      <Section key={section.title}>
        <SectionHead type="button">
          {section.title}
          <Chevrons />
        </SectionHead>
        <PropTable>
          <tbody>
            {section.rows.map(([name, value, kind], i) => (
              <tr key={i}>
                <th scope="row">{name}</th>
                <td>
                  <Value $cjk={kind === 'cjk'}>
                    {kind === 'swatch' && <Swatch />}
                    {kind === 'rule' && <Rule />}
                    {value}
                  </Value>
                </td>
              </tr>
            ))}
          </tbody>
        </PropTable>
      </Section>
    ))}
    <Section>
      <SectionHead type="button" $cut>
        其他
        <Chevrons />
      </SectionHead>
    </Section>
    <Info />
  </Palette>
);

const outline =
  '401,191 404,191 425,204 428,207 433,205 447,212 443,215 458,223 453,226 466,235 472,232 476,234 481,232 493,239 490,243 ' +
  '505,252 511,249 525,257 522,261 537,269 541,267 556,276 551,278 564,284 536,299 535,305 518,316 502,325 490,327 462,342 ' +
  '438,328 438,326 435,326 405,307 403,309 393,302 392,300 347,277 345,273 341,275 330,268 329,263 325,263 302,249';

const Drawing = () => (
  <Canvas viewBox="190 34 447 380" preserveAspectRatio="xMidYMid slice" role="img" aria-label="模型空间">
    <g fill="none" stroke="#fff" strokeWidth="1" shapeRendering="crispEdges">
      <polygon points={outline} />
      <path d="M190 216L441 361M452 367L532 414M359 414L441 367M452 361L637 255" />
      <path d="M321 291l25 14" strokeWidth="2" strokeDasharray="5 3" />
      <path d="M563 284v13l-12 8" />
      <path d="M518.500 280v35M518 316l-27-16M518 316l30-17" />
      <path d="M514 314l5-2 5 3-5 4zM516 316h6" />
      <path d="M487 297l6 1-3 6zM491 298a3 3 0 1 1 0 6M549 298a3 3 0 1 0 1 4M543 298l7-1-4 6" />
      <path d="M442.500 359.500h9v8h-9zM442 364h3M450 364h3M444 362l2 2-2 2M450 362l-2 2 2 2" />
    </g>
    <g fill="#fff" fontFamily="DejaVu Sans, sans-serif" fontWeight="200" fontSize="14" textAnchor="middle">
      <text x="518" y="273">Z</text>
      <text x="478" y="297">Y</text>
      <text x="560" y="298">X</text>
    </g>
    <path d="M446 365v18l4-4 4 7 3-1-4-7h5z" fill="#fff" stroke="#000" strokeWidth=".5" />
  </Canvas>
);

const navPaths = ['M2 1v9M9 1v9L4 5.500z', 'M8 1v9L3 5.500z', 'M3 1v9l5-4.500z', 'M9 1v9M2 1v9l5-4.500z'];
const navNames = ['第一个', '上一个', '下一个', '最后一个'];

const View = () => (
  <Viewport>
    <ViewRow>
      <Drawing />
      <Track $vertical>
        <ScrollButton type="button" aria-label="向上滚动"><Arrow dir="up" /></ScrollButton>
        <Gap $n={85} />
        <ScrollButton type="button" aria-label="垂直滑块" />
        <Gap $n={247} />
        <ScrollButton type="button" aria-label="向下滚动"><Arrow dir="down" /></ScrollButton>
      </Track>
    </ViewRow>
    <TabRow>
      {navPaths.map((d, i) => (
        <ScrollButton key={i} type="button" aria-label={navNames[i]} $w={18} $h={15}>
          <svg width="11" height="11" viewBox="0 0 11 11">
            <path d={d} stroke="#000" strokeWidth=".8" />
          </svg>
        </ScrollButton>
      ))}
      <Tabs>
        <Tab type="button" $active>模型</Tab>
        <Tab type="button">布局1</Tab>
        <Tab type="button">布局2</Tab>
      </Tabs>
      <Gap />
      <ScrollButton type="button" aria-label="分隔条" $w={5} $h={15} />
      <Track $width={147}>
        <ScrollButton type="button" aria-label="向左滚动" $h={15}><Arrow dir="left" /></ScrollButton>
        <Gap $n={39} />
        <ScrollButton type="button" aria-label="水平滑块" $h={15} />
        <Gap $n={60} />
        <ScrollButton type="button" aria-label="向右滚动" $h={15}><Arrow dir="right" /></ScrollButton>
      </Track>
    </TabRow>
  </Viewport>
);

// Chinese glyphs are set one pixel larger than the console latin
const Mixed = ({ text }) =>
  text.split(/([\u3000-\u9fff]+)/).map((part, i) => (i % 2 ? <Cjk key={i}>{part}</Cjk> : part));

const CommandWindow = () => (
  <Command>
    <CommandGrip />
    <CommandBox>
      <History>
        <Lines>
          <Line><Mixed text="命令: _-view 输入选项 [?/正交(O)/删除(D)/恢复(R)/保存(S)/UCS(U)/窗口(W)]:" /></Line>
          <Line><Mixed text="_swiso 正在重生成模型。" /></Line>
        </Lines>
        <Track $vertical>
          <ScrollButton type="button" aria-label="向上滚动"><Arrow dir="up" /></ScrollButton>
          <ScrollButton type="button" aria-label="向下滚动"><Arrow dir="down" /></ScrollButton>
        </Track>
      </History>
      <Prompt>
        <label htmlFor="command"><Mixed text="命令:" /></label>
        <input id="command" type="text" />
        <Track>
          <ScrollButton type="button" aria-label="向左滚动" $h={15}><Arrow dir="left" /></ScrollButton>
          <ScrollButton type="button" aria-label="水平滑块" $h={15} />
          <Corner $open />
          <ScrollButton type="button" aria-label="向右滚动" $h={15}><Arrow dir="right" /></ScrollButton>
        </Track>
        <Corner />
      </Prompt>
    </CommandBox>
  </Command>
);

const App = () => (
  <Window>
    <GlobalStyle />
    <Defs />
    <TopBar>
      <TopGroup $grow $start={3} $end={4}>
        <Tool type="button" aria-label="图层特性管理器" $wide><Layers /></Tool>
        <Combo label="图层" value="0" $grow $textPad={4} $font={SANS}>
          <Bulb />
          <Sun />
          <SunViewport />
          <Lock />
          <Swatch $tight />
        </Combo>
        <Tool type="button" aria-label="将对象的图层置为当前" $wide><Layers gold /></Tool>
        <Tool type="button" aria-label="上一个图层" $wide><Layers back /></Tool>
      </TopGroup>
      <TopGroup $start={4} $end={5}>
        <Grip />
        <Combo label="颜色控制" value="ByLayer" $width={148} $pad={2} $font={SERIF}>
          <Swatch />
        </Combo>
      </TopGroup>
      <TopGroup $start={2} $last>
        <Combo label="线型控制" value="ByLayer" $width={155} $font={SERIF}>
          <Rule $width={60} />
        </Combo>
      </TopGroup>
    </TopBar>
    <Main>
      <Properties />
      <WorkArea>
        <Upper>
          <Toolbar items={ucsIcons} wrap={Ucs} vertical $width={25} aria-label="UCS" />
          <View />
          <Toolbar items={drawIcons} vertical $width={25} $gap={1} aria-label="绘图" />
          <Toolbar items={modifyIcons} vertical $width={22} aria-label="修改" />
        </Upper>
        <Docks>
          <DockRow $indent={3}>
            <Toolbar items={viewIcons} $height={28} aria-label="视图" />
          </DockRow>
          <DockRow>
            <Toolbar items={shadeIcons} $height={27} $gap={1} aria-label="着色" />
            <Toolbar items={solidIcons} $height={27} aria-label="实体" />
          </DockRow>
        </Docks>
      </WorkArea>
    </Main>
    <CommandWindow />
  </Window>
);

export default App;
